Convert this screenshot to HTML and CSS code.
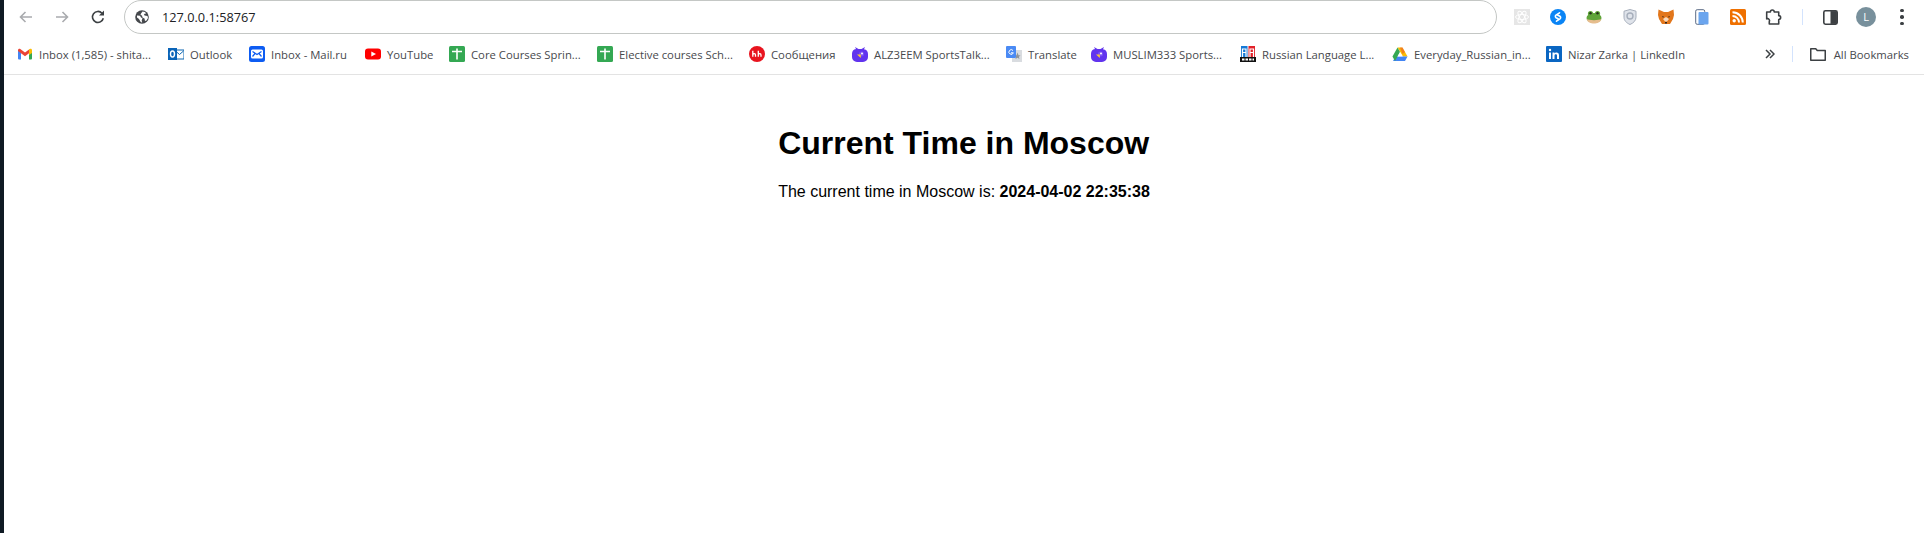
FILE: index.html
```html
<!DOCTYPE html>
<html lang="en">
<head>
    <meta charset="UTF-8">
    <meta name="viewport" content="width=device-width, initial-scale=1.0">
    <title>Current Time in Moscow</title>
    <link rel="stylesheet" href="styles.css">
</head>
<body>
    <div class="edge"></div>
    <div class="window">
        <div class="toolbar">
            <div class="btn"><svg width="16" height="16" viewBox="0 0 16 16" fill="none" stroke="#a9abae" stroke-width="1.6"><path d="M14 8H2.5M7.5 3L2.5 8l5 5"/></svg></div>
            <div class="btn"><svg width="16" height="16" viewBox="0 0 16 16" fill="none" stroke="#a9abae" stroke-width="1.6"><path d="M2 8h11.5M8.5 3l5 5-5 5"/></svg></div>
            <div class="btn"><svg width="16" height="16" viewBox="0 0 16 16" fill="none" stroke="#3c4043" stroke-width="1.6"><path d="M13.3 9.2A5.5 5.5 0 1 1 12 4.2"/><path d="M14 1.5v5H9z" fill="#3c4043" stroke="none"/></svg></div>
            <div class="omnibox">
                <svg width="14" height="14" viewBox="0 0 14 14"><circle cx="7" cy="7" r="6.8" fill="#45484c"/><path d="M2 5.5l3 .3 1 1.700 1.500.7-.8 2.300.5 2.200-1.500-.6L4 9 2 7.500zM7.500 1.500l2.500.5 1 1.500-2 .5.5 1.500 3 .5.5 2-1.500 2.500-1.500.5-.5-2.500-2-1-.5-2-1.500-.5.5-1.500z" fill="#fff"/></svg>
                <span class="url">127.0.0.1:58767</span>
            </div>
            <div class="extensions">
                <div class="btn"><svg width="16" height="16" viewBox="0 0 16 16"><rect width="16" height="16" fill="#e6e6e6"/><g fill="none" stroke="#fff"><ellipse cx="8" cy="8" rx="6.5" ry="2.5"/><ellipse cx="8" cy="8" rx="6.5" ry="2.5" transform="rotate(60 8 8)"/><ellipse cx="8" cy="8" rx="6.5" ry="2.5" transform="rotate(120 8 8)"/></g></svg></div>
                <div class="btn"><svg width="16" height="16" viewBox="0 0 16 16"><circle cx="8" cy="8" r="8" fill="#0a84f5"/><path d="M9.5 3.800L6 6.200a1.500 1.500 0 0 0 .1 2.500l2 1M6.500 12.200L10 9.800a1.500 1.500 0 0 0-.1-2.500l-2-1" fill="none" stroke="#fff" stroke-width="1.6" stroke-linecap="round"/></svg></div>
                <div class="btn"><svg width="16" height="16" viewBox="0 0 16 16"><ellipse cx="8" cy="9" rx="7.5" ry="5" fill="#5fa53a"/><circle cx="4.5" cy="4.5" r="2.6" fill="#5fa53a"/><circle cx="11.5" cy="4.5" r="2.6" fill="#5fa53a"/><circle cx="4.5" cy="4.300" r="1.200" fill="#23301c"/><circle cx="11.5" cy="4.300" r="1.200" fill="#23301c"/><path d="M.7 10c2 1.500 12.600 1.500 14.600 0-.8 3.500-4 4.500-7.300 4.500S1.500 13.500.7 10z" fill="#e6bd8e"/></svg></div>
                <div class="btn"><svg width="14" height="16" viewBox="0 0 14 16"><path d="M7 .5l6 1.700v6c0 3.400-2.500 5.800-6 7.300-3.500-1.500-6-3.900-6-7.300v-6z" fill="#dfe3ea" stroke="#a6aebb"/><circle cx="7" cy="7" r="3" fill="none" stroke="#a6aebb" stroke-width="1.4"/></svg></div>
                <div class="btn"><svg width="16" height="16" viewBox="0 0 16 16"><path d="M.5.500L6 3h4L15.500.500 16 6l-1 4-3 5H4L1 10 0 6z" fill="#e2761b"/><path d="M5 10l2 2.500h2L11 10 8 8z" fill="#f6d9bd"/><path d="M4 7l2 .8-1 1zM12 7l-2 .8 1 1z" fill="#33251a"/><path d="M7 13h2v1.500H7z" fill="#33251a"/></svg></div>
                <div class="btn"><svg width="14" height="16" viewBox="0 0 14 16"><rect x=".7" y=".7" width="9" height="14.6" rx="1.5" fill="#fff" stroke="#5a6b85"/><rect x="3.500" y="3" width="10" height="12.5" rx="1" fill="#6ba5ee"/></svg></div>
                <div class="btn"><svg width="16" height="16" viewBox="0 0 16 16"><rect width="16" height="16" rx="1.5" fill="#ef7000"/><circle cx="4.200" cy="11.800" r="1.700" fill="#fff"/><path d="M2.500 7a6.500 6.500 0 0 1 6.500 6.500M2.500 3.200a10.300 10.300 0 0 1 10.300 10.300" fill="none" stroke="#fff" stroke-width="2"/></svg></div>
                <div class="btn"><svg width="18" height="18" viewBox="0 0 16 16" fill="none" stroke="#3c4043" stroke-width="1.4"><path d="M1.500 3.500h3.300a1.700 1.700 0 0 1 3.400 0h4v3.300a1.700 1.700 0 0 1 0 3.400v4h-8.400v-2.200a1.700 1.700 0 0 0-2.300-2.300z" stroke-linejoin="round"/></svg></div>
            </div>
            <div class="sep"></div>
            <div class="btn"><svg width="15" height="15" viewBox="0 0 14 14"><rect x=".75" y=".75" width="12.5" height="12.5" rx="1.5" fill="#fff" stroke="#3c4043" stroke-width="1.5"/><rect x="7" y="1" width="6" height="12" fill="#3c4043"/></svg></div>
            <div class="btn"><div class="avatar">L</div></div>
            <div class="btn"><div class="dots"><i></i><i></i><i></i></div></div>
        </div>

        <div class="bookmarks">
            <div class="mark">
                <svg width="16" height="16" viewBox="0 0 16 16"><path d="M1 13.500V4.200L4 6.500v7H2a1 1 0 0 1-1-1z" fill="#4285f4"/><path d="M1 4.200c0-1.300 1.400-1.800 2.300-1.200L8 6.500 12.700 3 12 7.200 8 10.200 1 5z" fill="#ea4335"/><path d="M12 6.500v7h2a1 1 0 0 0 1-1V7z" fill="#34a853"/><path d="M12 3.500l.7-.5c1-.7 2.300-.1 2.300 1.200V7l-3 2z" fill="#fbbc04"/></svg>
                <span>Inbox (1,585) - shita...</span>
            </div>
            <div class="mark">
                <svg width="16" height="16" viewBox="0 0 16 16"><rect x="7" y="4" width="9" height="9" fill="#fff" stroke="#0a64b0"/><path d="M7.500 5l4 3.500L15.500 5" fill="none" stroke="#0a64b0"/><rect y="2" width="9" height="12" fill="#0a64b8"/><ellipse cx="4.500" cy="8" rx="2" ry="3" fill="none" stroke="#fff" stroke-width="1.4"/></svg>
                <span>Outlook</span>
            </div>
            <div class="mark">
                <svg width="16" height="16" viewBox="0 0 16 16"><rect width="16" height="16" rx="2.500" fill="#0d5cf2"/><rect x="2" y="3.500" width="12" height="9" rx="1.500" fill="#fff"/><path d="M3.500 5.500L8 8.500l4.500-3M3.500 10.500L6 7.500M12.500 10.500L10 7.500" fill="none" stroke="#0d5cf2" stroke-width="1.200"/></svg>
                <span>Inbox - Mail.ru</span>
            </div>
            <div class="mark">
                <svg width="16" height="16" viewBox="0 0 16 16"><rect y="2.500" width="16" height="11" rx="3" fill="#f00"/><path d="M6.300 5.500L11 8l-4.700 2.500z" fill="#fff"/></svg>
                <span>YouTube</span>
            </div>
            <div class="mark">
                <svg width="16" height="16" viewBox="0 0 16 16"><rect width="16" height="16" rx="1.500" fill="#34a853"/><path d="M3 5.500h10M8 2.500v11" stroke="#fff" stroke-width="1.600"/></svg>
                <span>Core Courses Sprin...</span>
            </div>
            <div class="mark">
                <svg width="16" height="16" viewBox="0 0 16 16"><rect width="16" height="16" rx="1.500" fill="#34a853"/><path d="M3 5.500h10M8 2.500v11" stroke="#fff" stroke-width="1.600"/></svg>
                <span>Elective courses Sch...</span>
            </div>
            <div class="mark">
                <svg width="16" height="16" viewBox="0 0 16 16"><circle cx="8" cy="8" r="8" fill="#e8141f"/><path d="M3.800 4.800v6M3.800 8.500c.4-1 2.700-1.300 2.700.5v1.800M9.300 4.800v6M9.300 8.500c.4-1 2.700-1.300 2.700.5v1.800" fill="none" stroke="#fff" stroke-width="1.300"/></svg>
                <span>Сообщения</span>
            </div>
            <div class="mark">
                <svg width="16" height="16" viewBox="0 0 16 16"><path d="M4 3L3 1l3.500 2h3L13 1l-1 2.200A5 5 0 0 1 16 8v3a5 5 0 0 1-5 5H5a5 5 0 0 1-5-5V8a5 5 0 0 1 4-5z" fill="#6134ee"/><circle cx="9.500" cy="8" r="2.500" fill="#7a52f5"/><circle cx="10" cy="7.500" r="1" fill="#fff"/><path d="M5 8.500h3.800v3.500z" fill="#ffc933"/></svg>
                <span>ALZ3EEM SportsTalk...</span>
            </div>
            <div class="mark">
                <svg width="16" height="16" viewBox="0 0 16 16"><rect x="6" y="4" width="10" height="12" fill="#d9dce0"/><path d="M11.500 6.500l1 2.800 2 .2-1.600 1.300.6 2.200-2-1.200-2 1.200.6-2.200-1.600-1.300 2-.2z" fill="#8f949a"/><rect width="10" height="12" rx="1" fill="#4a8af4"/><path d="M7 4.500a2.300 2.300 0 1 0 .4 2.300H5" fill="none" stroke="#fff"/></svg>
                <span>Translate</span>
            </div>
            <div class="mark">
                <svg width="16" height="16" viewBox="0 0 16 16"><path d="M4 3L3 1l3.500 2h3L13 1l-1 2.200A5 5 0 0 1 16 8v3a5 5 0 0 1-5 5H5a5 5 0 0 1-5-5V8a5 5 0 0 1 4-5z" fill="#6134ee"/><circle cx="9.500" cy="8" r="2.500" fill="#7a52f5"/><circle cx="10" cy="7.500" r="1" fill="#fff"/><path d="M5 8.500h3.800v3.500z" fill="#ffc933"/></svg>
                <span>MUSLIM333 Sports...</span>
            </div>
            <div class="mark">
                <svg width="16" height="16" viewBox="0 0 16 16"><rect x="1" width="6.500" height="11" fill="#1679d6"/><rect x="8.500" width="6.500" height="11" fill="#e2222a"/><path d="M2.500 11V3h3.500v8M2.500 6.500h3.500M10 11V3h3.500v8M10 6.500h3.500" fill="none" stroke="#fff" stroke-width="1.200"/><rect y="11" width="16" height="5" fill="#111"/><path d="M2 13.500h12" stroke="#fff" stroke-width="2" stroke-dasharray="2.500 1"/></svg>
                <span>Russian Language L...</span>
            </div>
            <div class="mark">
                <svg width="16" height="16" viewBox="0 0 16 16"><path d="M5.500 1.500h5L15.500 10.500h-4.500z" fill="#fbbc04"/><path d="M8 1.500h2.500L13 6 10.500 8z" fill="#ea4335" opacity=".5"/><path d="M3.500 10.500h12L13 15H1z" fill="#4285f4"/><path d="M5.500 1.500L.5 10.500 3 15l5-9z" fill="#34a853"/><path d="M8 6l-2.500 4.500h5z" fill="#fff" opacity=".7"/></svg>
                <span>Everyday_Russian_in...</span>
            </div>
            <div class="mark">
                <svg width="16" height="16" viewBox="0 0 16 16"><rect width="16" height="16" rx="1" fill="#0a66c2"/><path d="M3 6.500h2V13H3zM6.500 6.500h2v1c.8-1.500 4.500-1.700 4.500 1.500v4h-2V9.500c0-1.600-2.500-1.500-2.500 0V13h-2z" fill="#fff"/><circle cx="4" cy="4" r="1.200" fill="#fff"/></svg>
                <span>Nizar Zarka | LinkedIn</span>
            </div>
            <div class="bookmarks-end">
                <svg width="10" height="10" viewBox="0 0 10 10" fill="none" stroke="#3c4043" stroke-width="1.5"><path d="M1 1l4 4-4 4M5 1l4 4-4 4"/></svg>
                <div class="sep short"></div>
                <div class="mark all">
                    <svg width="16" height="16" viewBox="0 0 16 16"><path d="M.75 2.750h5l1.500 1.800h8v9.700H.75z" fill="none" stroke="#3c4043" stroke-width="1.5" stroke-linejoin="round"/></svg>
                    <span>All Bookmarks</span>
                </div>
            </div>
        </div>

        <div class="content">
            <div class="time">
                <h1>Current Time in Moscow</h1>
                <p>The current time in Moscow is: <strong>2024-04-02 22:35:38</strong></p>
            </div>
        </div>
    </div>
</body>
</html>
```

FILE: styles.css
```css
html, body {
    height: 100%;
}
body {
    display: flex;
    margin: 0;
    overflow: hidden;
    background-color: #fff;
    font-family: "Open Sans", "Noto Sans", sans-serif;
}
.edge {
    width: 4px;
    background-color: #0f1a24;
}
.window {
    flex: 1;
    display: flex;
    flex-direction: column;
    min-width: 0;
}
.toolbar {
    display: flex;
    align-items: center;
    height: 34px;
    padding: 0 4px 3px;
}
.btn {
    display: flex;
    align-items: center;
    justify-content: center;
    width: 36px;
    height: 34px;
    flex: none;
}
.omnibox {
    flex: 1;
    display: flex;
    align-items: center;
    gap: 13px;
    height: 32px;
    margin: 0 7px 0 8px;
    padding-left: 10px;
    border: 1px solid #c4c7c5;
    border-radius: 17px;
}
.url {
    font-size: 12.75px;
    color: #202124;
}
.extensions {
    display: flex;
    flex: none;
}
.sep {
    width: 1px;
    height: 16px;
    margin: 0 9px 0 10px;
    background-color: #d3e3fd;
}
.sep.short {
    margin: 0 17px 0 17px;
}
.avatar {
    width: 20px;
    height: 20px;
    border-radius: 50%;
    background-color: #78909c;
    color: #fff;
    font-size: 11px;
    line-height: 20px;
    text-align: center;
}
.dots {
    display: flex;
    flex-direction: column;
    gap: 3px;
}
.dots i {
    width: 3.5px;
    height: 3.5px;
    border-radius: 50%;
    background-color: #3c4043;
}
.bookmarks {
    display: grid;
    grid-template-columns: 151px 81px 116px 84px 148px 152px 103px 154px 85px 149px 152px 154px 1fr auto;
    align-items: center;
    height: 38px;
    padding: 0 15px 3px 13px;
    border-bottom: 1px solid #e3e3e3;
    box-sizing: border-box;
    font-size: 11.3px;
    color: #47494d;
}
.mark {
    display: flex;
    align-items: center;
    gap: 6px;
    white-space: nowrap;
}
.mark.all {
    gap: 8px;
}
.mark svg {
    flex: none;
}
.bookmarks-end {
    display: flex;
    align-items: center;
}
.content {
    display: flex;
    justify-content: center;
    padding-top: 50px;
}
.time {
    font-family: "Liberation Sans", Arial, sans-serif;
    color: #000;
}
.time h1 {
    margin: 0 0 21px;
    font-size: 32px;
}
.time p {
    margin: 0;
    font-size: 16px;
}
```
